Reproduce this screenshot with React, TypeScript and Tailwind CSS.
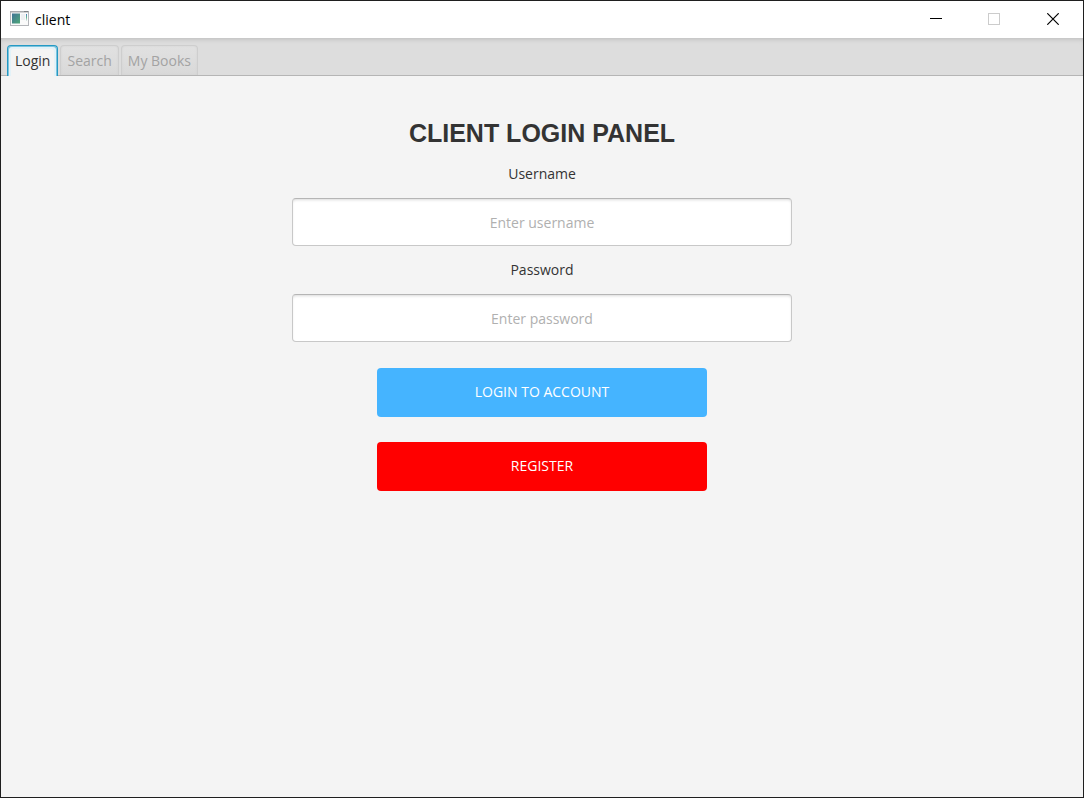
import React, { useState } from "react";

const tabs = ["Login", "Search", "My Books"];

function AppIcon() {
  return (
    <svg className="mb-0.5" width="19" height="16" viewBox="0 0 19 16" aria-hidden="true">
      <defs>
        <linearGradient id="pane" x1="0" y1="0" x2="1" y2="1">
          <stop offset="0" stopColor="#3f7396" />
          <stop offset="1" stopColor="#4fa878" />
        </linearGradient>
        <linearGradient id="strip" x1="0" y1="0" x2="0" y2="1">
          <stop offset="0" stopColor="#4a7fc0" />
          <stop offset="0.5" stopColor="#68b690" />
          <stop offset="1" stopColor="#e8eef0" />
        </linearGradient>
      </defs>
      <rect x="0.5" y="0.5" width="18" height="14" fill="#fafafa" stroke="#b4b6ba" />
      <rect x="0" y="0" width="19" height="1.5" fill="#a9abae" />
      <rect x="14" y="0" width="4" height="1" fill="#7f8184" />
      <rect x="2" y="2.5" width="8" height="10" fill="url(#pane)" />
      <rect x="11" y="3" width="4" height="6" fill="#eef0f2" />
      <rect x="16" y="3" width="1" height="7" fill="url(#strip)" />
    </svg>
  );
}

function TitleBar() {
  return (
    <header className="flex h-[37px] items-center justify-between bg-white">
      <div className="flex items-center gap-1.5 pl-[9px]">
        <AppIcon />
        <span className="text-sm text-black">client</span>
      </div>
      <div className="flex self-stretch pb-px">
        <button aria-label="Minimize" className="flex w-[58px] items-center justify-center">
          <svg width="12" height="12" viewBox="0 0 12 12" stroke="#000">
            <path d="M0 5.5h12" />
          </svg>
        </button>
        <button aria-label="Maximize" disabled className="flex w-[58px] items-center justify-center">
          <svg width="12" height="12" viewBox="0 0 12 12" fill="none" stroke="#ccc">
            <rect x="0.5" y="0.5" width="11" height="11" />
          </svg>
        </button>
        <button aria-label="Close" className="flex w-[60px] items-center justify-center">
          <svg width="12" height="12" viewBox="0 0 12 12" stroke="#000" strokeWidth="1.2">
            <path d="M0.3 0.3l11.4 11.4M11.7 0.3L0.3 11.7" />
          </svg>
        </button>
      </div>
    </header>
  );
}

function Field({ id, label, type }: { id: string; label: string; type: string }) {
  return (
    <div className="flex w-full flex-col items-center">
      <label htmlFor={id} className="flex h-12 items-center text-[#333]">
        {label}
      </label>
      <input
        id={id}
        type={type}
        placeholder={`Enter ${label.toLowerCase()}`}
        className="h-12 w-full rounded border border-[#c8c8c8] border-t-[#b5b5b5] bg-white pt-px text-center text-[#333] shadow-[inset_0_2px_3px_-1px_#dadada] outline-none placeholder:text-[#b0b0b0]"
      />
    </div>
  );
}

export default function App() {
  const [active, setActive] = useState("Login");
  return (
    <div className="flex min-h-screen flex-col border border-[#1f1f1f] bg-[#f4f4f4] font-['Open_Sans','Noto_Sans',sans-serif] text-sm">
      <TitleBar />
      <nav
        role="tablist"
        className="flex h-[38px] items-end gap-0.5 border-b border-[#b5b5b5] bg-[#dddddd] pl-1.5 shadow-[inset_0_3px_5px_-2px_#bababa]"
      >
        {tabs.map((tab) => (
          <button
            key={tab}
            role="tab"
            aria-selected={tab === active}
            onClick={() => setActive(tab)}
            className={
              tab === active
                ? "-mb-px h-[31px] rounded-t border border-b-0 border-[#2499c4] bg-[#f4f4f4] px-[7px] text-[#333] shadow-[inset_1px_1px_#7cc4de,inset_-1px_1px_#7cc4de,inset_3px_3px_#e3f2f8,inset_-3px_3px_#e3f2f8]"
                : "h-[30px] rounded-t border border-b-0 border-[#cecece] bg-linear-to-b from-[#e1e1e1] to-[#d9d9d9] px-1.5 text-[#a3a3a3] shadow-[inset_0_0_2px_#d0d0d0]"
            }
          >
            {tab}
          </button>
        ))}
      </nav>
      <main className="flex flex-1 flex-col items-center px-6 pt-10">
        <form
          className="flex w-full max-w-[500px] flex-col items-center"
          onSubmit={(e) => e.preventDefault()}
        >
          <h1 className="font-['Liberation_Sans',Arial,sans-serif] text-[25px] leading-[34px] font-bold text-[#333]">
            CLIENT LOGIN PANEL
          </h1>
          <Field id="username" label="Username" type="text" />
          <Field id="password" label="Password" type="password" />
          <div className="flex w-full max-w-[330px] flex-col gap-[25px] pt-[26px]">
            <button type="submit" className="h-[49px] rounded bg-[#45b4ff] pb-0.5 text-white">
              LOGIN TO ACCOUNT
            </button>
            <button type="button" className="h-[49px] rounded bg-[#ff0000] pb-0.5 text-white">
              REGISTER
            </button>
          </div>
        </form>
      </main>
    </div>
  );
}
